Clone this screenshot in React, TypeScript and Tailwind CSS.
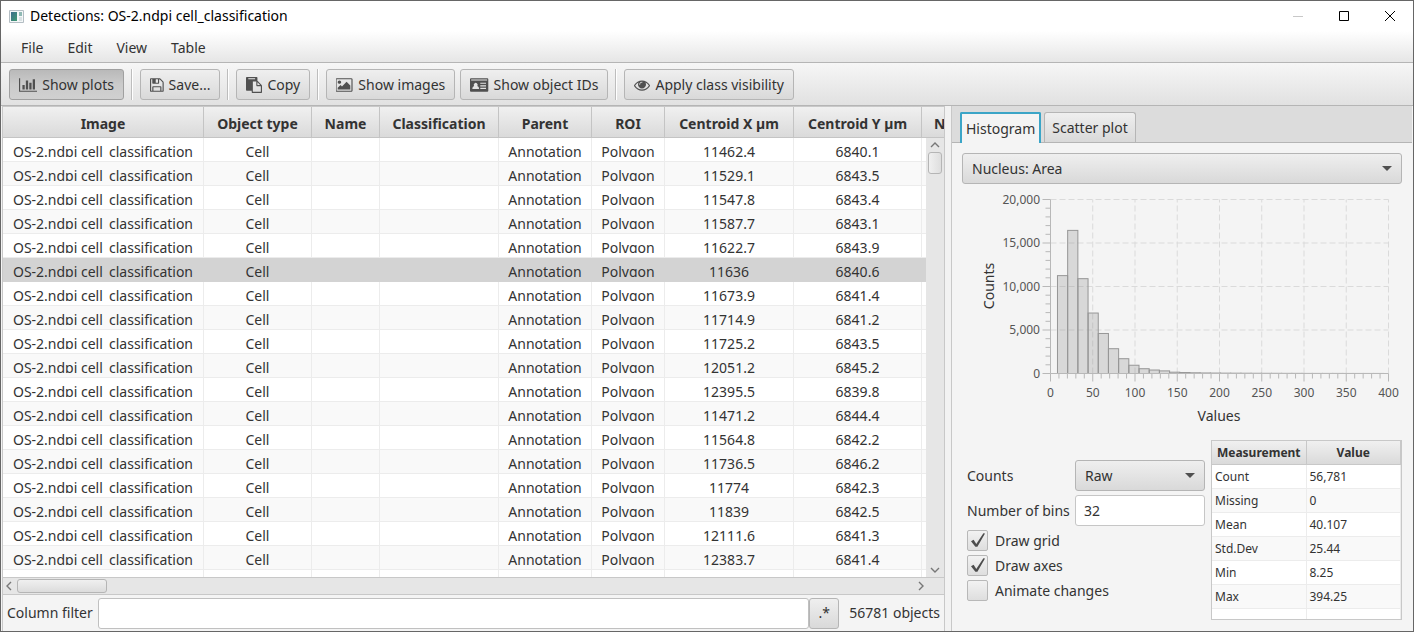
import React from 'react';

const columns = [
  { title: 'Image', width: 201 },
  { title: 'Object type', width: 108 },
  { title: 'Name', width: 68 },
  { title: 'Classification', width: 119 },
  { title: 'Parent', width: 93 },
  { title: 'ROI', width: 73 },
  { title: 'Centroid X µm', width: 129 },
  { title: 'Centroid Y µm', width: 128 },
  { title: 'N', width: undefined },
];

const centroids = [
  ['11462.4', '6840.1'], ['11529.1', '6843.5'], ['11547.8', '6843.4'], ['11587.7', '6843.1'],
  ['11622.7', '6843.9'], ['11636', '6840.6'], ['11673.9', '6841.4'], ['11714.9', '6841.2'],
  ['11725.2', '6843.5'], ['12051.2', '6845.2'], ['12395.5', '6839.8'], ['11471.2', '6844.4'],
  ['11564.8', '6842.2'], ['11736.5', '6846.2'], ['11774', '6842.3'], ['11839', '6842.5'],
  ['12111.6', '6841.3'], ['12383.7', '6841.4'],
];
const selectedRow = 5;

const stats = [
  ['Count', '56,781'], ['Missing', '0'], ['Mean', '40.107'],
  ['Std.Dev', '25.44'], ['Min', '8.25'], ['Max', '394.25'],
];

const bins = [
  11250, 16450, 10900, 6950, 4600, 2850, 1700, 950, 550, 400, 300, 150, 110, 80, 60, 50,
  40, 35, 30, 25, 20, 20, 15, 15, 10, 10, 10, 10, 5, 5, 5, 5,
];

const icons = {
  chart: {
    box: '0 0 2048 1792',
    d: 'M640 896v512h-256v-512h256zm384-512v1024h-256v-1024h256zm1024 1152v128h-2048v-1536h128v1408h1920zm-640-896v768h-256v-768h256zm384-384v1152h-256v-1152h256z',
  },
  save: {
    box: '128 0 1536 1792',
    d: 'M512 1536h768v-384h-768v384zm896 0h128v-896q0-14-10-38.5t-20-34.5l-281-281q-10-10-34-20t-39-10v416q0 40-28 68t-68 28h-576q-40 0-68-28t-28-68v-416h-128v1280h128v-416q0-40 28-68t68-28h832q40 0 68 28t28 68v416zm-384-928v-320q0-13-9.5-22.5t-22.5-9.5h-192q-13 0-22.5 9.5t-9.5 22.5v320q0 13 9.5 22.5t22.5 9.5h192q13 0 22.5-9.5t9.5-22.5zm640 32v928q0 40-28 68t-68 28h-1344q-40 0-68-28t-28-68v-1344q0-40 28-68t68-28h928q40 0 88 20t76 48l280 280q28 28 48 76t20 88z',
  },
  copy: {
    box: '0 0 1792 1792',
    d: 'M768 1664h896v-640h-416q-40 0-68-28t-28-68v-416h-384v1152zm256-1440v-64q0-13-9.5-22.5t-22.5-9.5h-704q-13 0-22.5 9.5t-9.5 22.5v64q0 13 9.5 22.5t22.5 9.5h704q13 0 22.5-9.5t9.5-22.5zm256 672h299l-299-299v299zm512 128v672q0 40-28 68t-68 28h-960q-40 0-68-28t-28-68v-160h-544q-40 0-68-28t-28-68v-1344q0-40 28-68t68-28h1088q40 0 68 28t28 68v328q21 13 36 28l408 408q28 28 48 76t20 88z',
  },
  image: {
    box: '0 0 1920 1792',
    d: 'M576 576q0 80-56 136t-136 56-136-56-56-136 56-136 136-56 136 56 56 136zm1024 384v448h-1408v-192l320-320 160 160 512-512zm96-704h-1600q-13 0-22.5 9.5t-9.5 22.5v1216q0 13 9.5 22.5t22.5 9.5h1600q13 0 22.5-9.5t9.5-22.5v-1216q0-13-9.5-22.5t-22.5-9.5zm160 32v1216q0 66-47 113t-113 47h-1600q-66 0-113-47t-47-113v-1216q0-66 47-113t113-47h1600q66 0 113 47t47 113z',
  },
  card: {
    box: '0 0 2048 1792',
    d: 'M112 128H1936a112 112 0 0 1 112 112V1552a112 112 0 0 1-112 112H112A112 112 0 0 1 0 1552V240A112 112 0 0 1 112 128ZM128 288V384H1920V288ZM256 1344H1024Q1024 1040 820 1010A220 220 0 1 0 460 1010Q256 1040 256 1344ZM1152 640V768H1792V640ZM1152 928V1056H1792V928ZM1152 1216V1344H1792V1216Z',
  },
  eye: {
    box: '0 0 1792 1792',
    d: 'M1664 960q-152-236-381-353 61 104 61 225 0 185-131.5 316.5t-316.5 131.5-316.5-131.5-131.5-316.5q0-121 61-225-229 117-381 353 133 205 333.5 326.5t434.5 121.5 434.5-121.5 333.5-326.5zm-720-384q0-20-14-34t-34-14q-125 0-214.5 89.5t-89.5 214.5q0 20 14 34t34 14 34-14 14-34q0-86 61-147t147-61q20 0 34-14t14-34zm848 384q0 34-20 69-140 230-376.5 368.5t-499.5 138.5-499.5-139-376.5-368q-20-35-20-69t20-69q140-229 376.5-368t499.5-139 499.5 139 376.5 368q20 35 20 69z',
  },
};

function Icon({ name }: { name: keyof typeof icons }) {
  return (
    <svg className="h-4 shrink-0 fill-[#505050]" viewBox={icons[name].box} fillRule="evenodd" aria-hidden="true">
      <path d={icons[name].d} />
    </svg>
  );
}

function ToolButton({ icon, label, pressed = false }: { icon: keyof typeof icons; label: string; pressed?: boolean }) {
  return (
    <button
      type="button"
      aria-pressed={pressed}
      className={
        'flex h-[31px] shrink-0 items-center gap-[5px] rounded-[3px] border px-[9px] pt-[2px] whitespace-nowrap ' +
        (pressed
          ? 'border-[#a0a0a0] bg-linear-to-b from-[#b9b9b9] via-[#cbcbcb] to-[#d0d0d0]'
          : 'border-[#b5b5b5] bg-linear-to-b from-[#efefef] to-[#d9d9d9]')
      }
    >
      <Icon name={icon} />
      {label}
    </button>
  );
}

function Separator() {
  return <span className="mx-[7px] h-[31px] w-[2px] shrink-0 border-l border-[#bdbdbd] bg-white" />;
}

function Chevron({ d, className }: { d: string; className: string }) {
  return (
    <svg className={className} viewBox="0 0 10 10" fill="none" stroke="#777" strokeWidth="1.4" aria-hidden="true">
      <path d={d} />
    </svg>
  );
}

function DetectionsTable() {
  return (
    <div className="relative min-h-0 flex-1 overflow-hidden bg-white">
      <table className="w-full table-fixed border-separate border-spacing-0 text-center">
        <colgroup>
          {columns.map((c) => (
            <col key={c.title} style={{ width: c.width }} />
          ))}
        </colgroup>
        <thead>
          <tr>
            {columns.map((c) => (
              <th
                key={c.title}
                scope="col"
                className="h-[31px] overflow-hidden border-r border-b border-[#c4c4c4] bg-linear-to-b from-[#f0f0f0] to-[#dadada] p-0 pt-[3px] font-bold whitespace-nowrap last:border-r-0 last:pl-3 last:text-left"
              >
                {c.title}
              </th>
            ))}
          </tr>
        </thead>
        <tbody>
          {centroids.map(([x, y], row) => {
            const cells = ['OS-2.ndpi cell_classification', 'Cell', '', '', 'Annotation', 'Polygon', x, y, ''];
            const tone =
              row === selectedRow ? 'bg-[#d3d3d3] border-[#d3d3d3]' : row % 2 ? 'bg-[#f9f9f9] border-[#ececec]' : 'bg-white border-[#ececec]';
            return (
              <tr key={row}>
                {cells.map((text, i) => (
                  <td key={i} className={`h-[24px] border-r border-b p-0 align-top ${tone}`}>
                    <div className="h-[19px] overflow-hidden leading-[27px] whitespace-nowrap">{text}</div>
                  </td>
                ))}
              </tr>
            );
          })}
          <tr>
            {columns.map((c) => (
              <td key={c.title} className="h-[24px] border-r border-[#ececec] bg-white p-0" />
            ))}
          </tr>
        </tbody>
      </table>
      <div className="absolute top-[31px] right-0 bottom-0 flex w-[18px] flex-col items-center bg-[#e6e6e6] py-[2px]">
        <Chevron className="size-[10px]" d="M1 7 5 3 9 7" />
        <div className="mt-[2px] h-[22px] w-[14px] rounded-[3px] border border-[#b5b5b5] bg-linear-to-r from-[#f0f0f0] to-[#dedede]" />
        <Chevron className="mt-auto size-[10px]" d="M1 3 5 7 9 3" />
      </div>
    </div>
  );
}

const px = (v: number) => 88.5 + v * 0.845;
const py = (v: number) => 189.5 - v * 0.0087;

function Histogram() {
  const xTicks = [0, 50, 100, 150, 200, 250, 300, 350, 400];
  const yTicks = [0, 5000, 10000, 15000, 20000];
  const binWidth = 386 / 32;
  return (
    <svg className="w-full" viewBox="0 0 440 246" role="img" aria-label="Histogram of Nucleus: Area">
      <g stroke="#dadada" strokeDasharray="6 3">
        {xTicks.slice(1).map((t) => (
          <line key={t} x1={px(t)} x2={px(t)} y1={py(0)} y2={py(20000)} />
        ))}
        {yTicks.slice(1).map((t) => (
          <line key={t} x1={px(0)} x2={px(400)} y1={py(t)} y2={py(t)} />
        ))}
      </g>
      <g fill="#808080" fillOpacity="0.24" stroke="#969696">
        {bins.map((n, i) => (
          <rect key={i} x={px(8.25 + i * binWidth)} y={py(n)} width={binWidth * 0.845} height={n * 0.0087} />
        ))}
      </g>
      <g stroke="#b8b8b8" fill="none">
        <path d={`M${px(0)} ${py(20000)}V${py(0)}H${px(400)}`} />
        {Array.from({ length: 41 }, (_, i) => (
          <line key={i} x1={px(i * 10)} x2={px(i * 10)} y1={py(0)} y2={py(0) + (i % 5 ? 5 : 8)} />
        ))}
        {Array.from({ length: 21 }, (_, i) => (
          <line key={i} x1={px(0) - (i % 5 ? 5 : 8)} x2={px(0)} y1={py(i * 1000)} y2={py(i * 1000)} />
        ))}
      </g>
      <g fill="#555" fontSize="12">
        {xTicks.map((t) => (
          <text key={t} x={px(t)} y="213" textAnchor="middle">{t}</text>
        ))}
        {yTicks.map((t) => (
          <text key={t} x="78" y={py(t) + 4} textAnchor="end">{t.toLocaleString('en-US')}</text>
        ))}
      </g>
      <g fill="#333" fontSize="14" textAnchor="middle">
        <text x="257" y="237">Values</text>
        <text transform="translate(32 102) rotate(-90)">Counts</text>
      </g>
    </svg>
  );
}

function Select({ id, label, options }: { id: string; label?: string; options: string[] }) {
  return (
    <div className="grid items-center">
      <select
        id={id}
        aria-label={label}
        className="col-start-1 row-start-1 h-[31px] w-full appearance-none rounded-[3px] border border-[#b5b5b5] bg-linear-to-b from-[#efefef] to-[#d9d9d9] px-[9px]"
      >
        {options.map((o) => (
          <option key={o}>{o}</option>
        ))}
      </select>
      <svg className="pointer-events-none col-start-1 row-start-1 mr-[10px] h-[5px] w-[10px] justify-self-end fill-[#505050]" viewBox="0 0 10 5" aria-hidden="true">
        <path d="M0 0H10L5 5Z" />
      </svg>
    </div>
  );
}

function Check({ label, checked = false }: { label: string; checked?: boolean }) {
  return (
    <label className="flex h-[25px] items-center gap-[7px]">
      <span className="grid size-[21px]">
        <input
          type="checkbox"
          defaultChecked={checked}
          className="peer col-start-1 row-start-1 size-[21px] appearance-none rounded-[2px] border border-[#b8b8b8] bg-linear-to-b from-[#f2f2f2] to-[#dedede]"
        />
        <svg className="pointer-events-none invisible col-start-1 row-start-1 size-[21px] fill-[#4c4c4c] peer-checked:visible" viewBox="0 0 21 21" aria-hidden="true">
          <path d="M4 11.2 6.6 9.8 9.3 14 16.4 3.2 18 3.6 10.4 16.8H8.4Z" />
        </svg>
      </span>
      {label}
    </label>
  );
}

function StatsTable() {
  return (
    <div className="h-[180px] min-w-0 flex-1 overflow-hidden border border-[#c8c8c8] bg-white text-[12px]">
      <table className="w-full table-fixed border-separate border-spacing-0">
        <thead>
          <tr>
            {['Measurement', 'Value'].map((t) => (
              <th key={t} scope="col" className="h-[24px] border-r border-b border-[#c8c8c8] bg-linear-to-b from-[#f0f0f0] to-[#dadada] p-0 font-bold">
                {t}
              </th>
            ))}
          </tr>
        </thead>
        <tbody>
          {stats.map(([name, value], i) => (
            <tr key={name} className={i % 2 ? 'bg-[#f9f9f9]' : 'bg-white'}>
              <td className="h-[24px] border-r border-b border-[#ececec] p-0 pl-[3px]">{name}</td>
              <td className="h-[24px] border-r border-b border-[#ececec] p-0 pl-[3px]">{value}</td>
            </tr>
          ))}
          <tr>
            <td className="h-[24px] border-r border-[#ececec] p-0" />
            <td className="h-[24px] border-r border-[#ececec] p-0" />
          </tr>
        </tbody>
      </table>
    </div>
  );
}

export default function App() {
  return (
    <div className="flex h-screen min-h-[600px] flex-col overflow-hidden border border-[#666] bg-[#f4f4f4] font-['Noto_Sans','Open_Sans',sans-serif] text-[14px] leading-5 text-[#333]">
      <header className="flex h-[30px] shrink-0 items-center bg-white pl-2 text-black">
        <svg className="mr-[6px] h-[13px] w-[15px]" viewBox="0 0 15 13" aria-hidden="true">
          <defs>
            <linearGradient id="pane" x1="0" y1="0" x2="1" y2="1">
              <stop offset="0" stopColor="#3d6d8c" />
              <stop offset="1" stopColor="#3f9a72" />
            </linearGradient>
          </defs>
          <path d="M.5 .5H14.5V12.5H.5Z" fill="#f4f7f8" stroke="#b4bec4" />
          <path d="M2 2H8V11H2Z" fill="url(#pane)" />
          <path d="M10 2H13V6H10Z" fill="#8fb9b4" />
          <path d="M10 7H13V11H10Z" fill="#d9e2e4" />
        </svg>
        <h1>Detections: OS-2.ndpi cell_classification</h1>
        <div className="ml-auto flex">
          <button type="button" aria-label="Minimize" className="grid h-[30px] w-[46px] place-items-center">
            <svg className="size-[10px]" viewBox="0 0 10 10" stroke="#c8c8c8"><path d="M0 5.5H10" /></svg>
          </button>
          <button type="button" aria-label="Maximize" className="grid h-[30px] w-[46px] place-items-center">
            <svg className="size-[10px]" viewBox="0 0 10 10" stroke="#000" fill="none"><path d="M.5 .5H9.5V9.5H.5Z" /></svg>
          </button>
          <button type="button" aria-label="Close" className="grid h-[30px] w-[46px] place-items-center">
            <svg className="size-[10px]" viewBox="0 0 10 10" stroke="#000"><path d="M0 0 10 10M10 0 0 10" /></svg>
          </button>
        </div>
      </header>

      <nav className="flex h-[32px] shrink-0 items-center gap-6 border-b border-[#b5b5b5] bg-linear-to-b from-white to-[#e6e6e6] px-5 pt-[2px]">
        {['File', 'Edit', 'View', 'Table'].map((m) => (
          <button key={m} type="button">{m}</button>
        ))}
      </nav>

      <div role="toolbar" aria-label="Table tools" className="flex h-[43px] shrink-0 items-center border-b border-[#b5b5b5] bg-linear-to-b from-[#f6f6f6] to-[#e1e1e1] px-2">
        <ToolButton icon="chart" label="Show plots" pressed />
        <Separator />
        <ToolButton icon="save" label="Save..." />
        <Separator />
        <ToolButton icon="copy" label="Copy" />
        <Separator />
        <div className="flex gap-[5px]">
          <ToolButton icon="image" label="Show images" />
          <ToolButton icon="card" label="Show object IDs" />
        </div>
        <Separator />
        <ToolButton icon="eye" label="Apply class visibility" />
      </div>

      <main className="flex min-h-0 flex-1 px-px">
        <section className="flex min-w-0 flex-1 flex-col border-x border-t border-[#c8c8c8]">
          <DetectionsTable />
          <div className="flex h-[18px] shrink-0 items-center border-y border-[#c8c8c8] bg-[#e6e6e6] pr-[18px] pl-px">
            <Chevron className="size-[10px]" d="M7 1 3 5 7 9" />
            <div className="ml-[3px] h-[14px] w-[90px] rounded-[3px] border border-[#b5b5b5] bg-linear-to-b from-[#f0f0f0] to-[#dcdcdc]" />
            <Chevron className="ml-auto size-[10px]" d="M3 1 7 5 3 9" />
          </div>
          <div className="flex h-[36px] shrink-0 items-center px-1">
            <label htmlFor="column-filter" className="mr-[5px] whitespace-nowrap">Column filter</label>
            <input id="column-filter" type="text" className="h-[31px] min-w-0 flex-1 rounded-[3px] border border-[#c0c0c0] bg-white px-2" />
            <button type="button" aria-label="Use regular expression" className="h-[31px] w-[30px] rounded-[3px] border border-[#b5b5b5] bg-linear-to-b from-[#efefef] to-[#d9d9d9]">.*</button>
            <span className="ml-[10px] whitespace-nowrap">56781 objects</span>
          </div>
        </section>

        <div className="w-[6px] shrink-0 bg-[#f2f2f2]" />

        <section className="flex w-[461px] shrink-0 flex-col border-l border-[#c8c8c8]">
          <div role="tablist" className="flex h-[37px] shrink-0 items-end gap-[3px] border-b border-[#b5b5b5] bg-[#dcdcdc] pl-2">
            <button type="button" role="tab" aria-selected="true" className="-mb-px h-[31px] rounded-t-[2px] border-2 border-b-0 border-[#3ba5c7] bg-[#f4f4f4] px-1">Histogram</button>
            <button type="button" role="tab" aria-selected="false" className="h-[30px] rounded-t-[3px] border border-b-0 border-[#b5b5b5] bg-linear-to-b from-[#efefef] to-[#d9d9d9] px-[7px]">Scatter plot</button>
          </div>
          <div className="flex flex-1 flex-col px-[10px] pt-[10px] pb-[11px]">
            <Select id="measurement" label="Measurement" options={['Nucleus: Area']} />
            <Histogram />
            <div className="mt-auto flex items-end gap-[6px]">
              <div className="w-[243px] shrink-0 pb-[17px] pl-[5px]">
                <div className="grid grid-cols-[108px_1fr] items-center gap-y-1">
                  <label htmlFor="counts">Counts</label>
                  <Select id="counts" options={['Raw']} />
                  <label htmlFor="bins" className="whitespace-nowrap">Number of bins</label>
                  <input id="bins" type="text" defaultValue="32" className="h-[31px] w-full rounded-[3px] border border-[#c6c6c6] bg-white px-2" />
                </div>
                <div className="mt-[2px]">
                  <Check label="Draw grid" checked />
                  <Check label="Draw axes" checked />
                  <Check label="Animate changes" />
                </div>
              </div>
              <StatsTable />
            </div>
          </div>
        </section>
      </main>
    </div>
  );
}
